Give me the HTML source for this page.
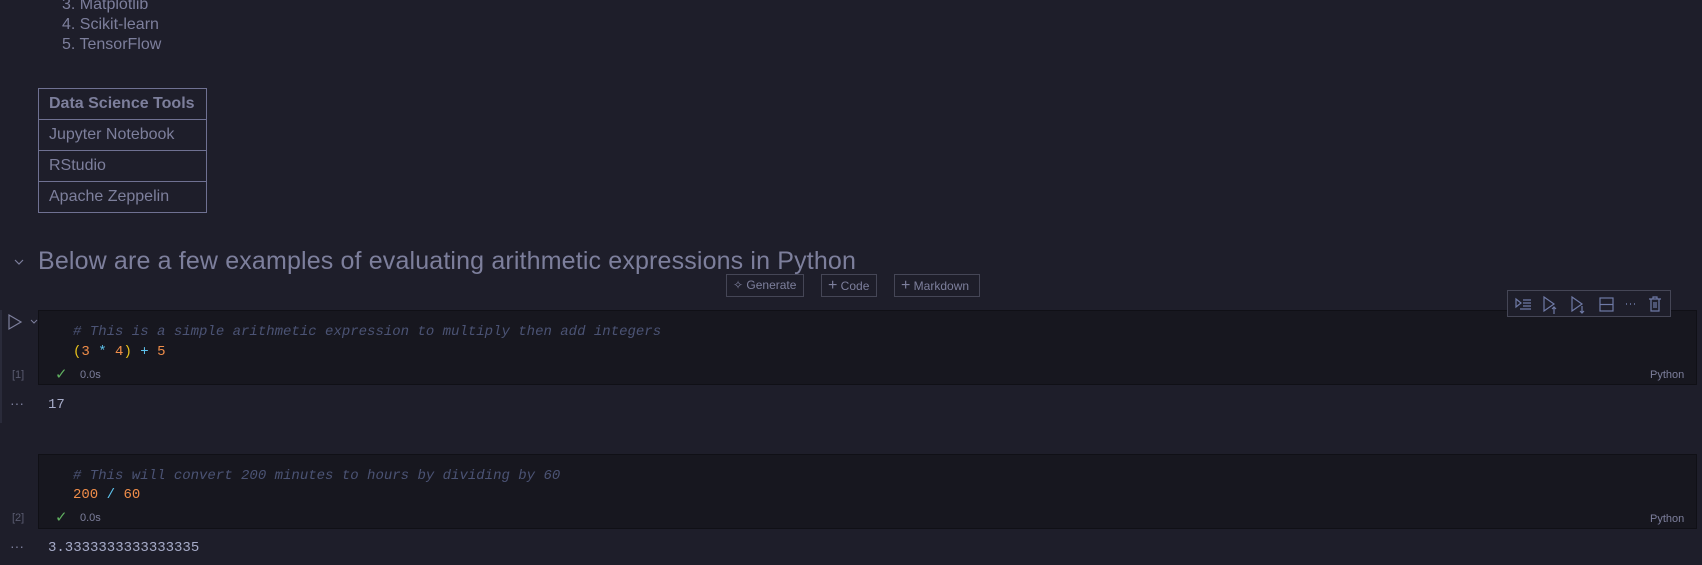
<!DOCTYPE html>
<html><head><meta charset="utf-8"><style>
*{margin:0;padding:0;box-sizing:border-box}
body{width:1702px;height:565px;overflow:hidden;background:#1e1e2a;font-family:"Liberation Sans",sans-serif;color:#7d7f9c;position:relative}
.a{position:absolute;white-space:nowrap}
.mono{font-family:"Liberation Mono",monospace;font-size:14px}
table{position:absolute;left:38px;top:88px;border-collapse:collapse;font-size:16px;color:#7d7f9c}
td,th{border:1px solid #6f7192;height:31px;padding:0 10px;text-align:left;width:168px}
th{font-weight:bold}
.cell{position:absolute;left:38px;width:1659px;height:75px;background:#17171f;border:1px solid #101016}
.btn{position:absolute;top:274px;height:23px;border:1px solid #454656;font-size:12px;line-height:21px;color:#7d7f9c;padding-left:6px}
.cm{color:#4b5374;font-style:italic}
.n{color:#f08d49}.p{color:#e8c21c}.o{color:#5ec4ee}
.sm{font-size:11px}
</style></head><body>
<div class="a" style="left:62px;top:-5px;font-size:16px;line-height:20px">3. Matplotlib<br>4. Scikit-learn<br>5. TensorFlow</div>
<table><tr><th>Data Science Tools</th></tr><tr><td>Jupyter Notebook</td></tr><tr><td>RStudio</td></tr><tr><td>Apache Zeppelin</td></tr></table>
<svg class="a" style="left:13px;top:257px" width="12" height="10"><path d="M2 3l4 4 4-4" stroke="#7d7f9c" fill="none" stroke-width="1.2"/></svg>
<div class="a" style="left:38px;top:247px;font-size:25px;letter-spacing:0.15px;color:#7d7f9c">Below are a few examples of evaluating arithmetic expressions in Python</div>
<div class="btn" style="left:726px;width:78px">✧ Generate</div>
<div class="btn" style="left:821px;width:56px"><span style="font-size:16px">+</span> Code</div>
<div class="btn" style="left:894px;width:86px"><span style="font-size:16px">+</span> Markdown</div>
<div class="a" style="left:0;top:310px;width:2px;height:113px;background:#2a2b3a"></div>
<svg class="a" style="left:6px;top:312px" width="40" height="20"><path d="M3 3l12 7-12 7z" stroke="#7d7f9c" fill="none" stroke-width="1.2"/><path d="M25 8l3 3 3-3" stroke="#7d7f9c" fill="none" stroke-width="1"/></svg>
<div class="cell" style="top:310px"></div>
<div class="a" style="left:1507px;top:290px;width:164px;height:27px;border:1px solid #454656;background:#1e1e2a"></div>
<svg class="a" style="left:1507px;top:290px" width="164" height="27" fill="none" stroke="#6f7aa6" stroke-width="1.2">
<path d="M9 9l5 4-5 4zM16 10h8M16 13h8M16 16h8M13 19h11"/>
<path d="M37 7l10 7-10 7z M47 24v-7M45 19l2-2 2 2"/>
<path d="M65 7l10 7-10 7z M75 16v7M73 21l2 2 2-2"/>
<rect x="93" y="8" width="13" height="13"/><path d="M93 14.5h13"/>
<path d="M119 14h1M123 14h1M127 14h1" stroke-width="1.6"/>
<path d="M142 9h12M146 9v-2h4v2M144 9v12h8V9M147 12v6M149 12v6"/>
</svg>
<div class="a mono cm" style="left:73px;top:324px">  # This is a simple arithmetic expression to multiply then add integers</div>
<div class="a mono" style="left:73px;top:344px"><span class="p">(</span><span class="n">3</span> <span class="o">*</span> <span class="n">4</span><span class="p">)</span> <span class="o">+</span> <span class="n">5</span></div>
<div class="a sm" style="left:12px;top:369px;color:#5a5c70">[1]</div>
<div class="a" style="left:55px;top:365px;color:#5fae5f;font-size:15px">✓</div>
<div class="a sm" style="left:80px;top:369px">0.0s</div>
<div class="a sm" style="left:1650px;top:369px">Python</div>
<div class="a" style="left:10px;top:395px;font-size:14px">···</div>
<div class="a mono" style="left:48px;top:397px;color:#a6abc8">17</div>
<div class="cell" style="top:454px"></div>
<div class="a mono cm" style="left:73px;top:468px">  # This will convert 200 minutes to hours by dividing by 60</div>
<div class="a mono" style="left:73px;top:487px"><span class="n">200</span> <span class="o">/</span> <span class="n">60</span></div>
<div class="a sm" style="left:12px;top:512px;color:#5a5c70">[2]</div>
<div class="a" style="left:55px;top:508px;color:#5fae5f;font-size:15px">✓</div>
<div class="a sm" style="left:80px;top:512px">0.0s</div>
<div class="a sm" style="left:1650px;top:513px">Python</div>
<div class="a" style="left:10px;top:538px;font-size:14px">···</div>
<div class="a mono" style="left:48px;top:540px;color:#a6abc8">3.3333333333333335</div>
</body></html>
